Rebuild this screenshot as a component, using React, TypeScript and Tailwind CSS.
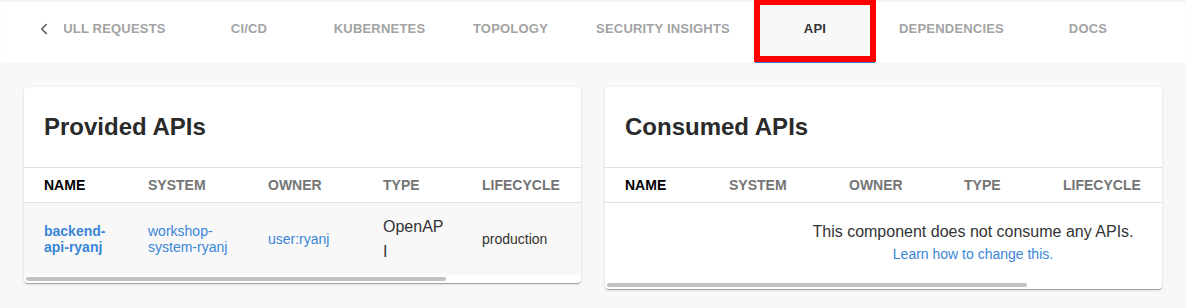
import React from 'react';
import { ChevronLeft } from 'lucide-react';

const tabs = [
  { label: 'PULL REQUESTS', width: 'w-[156px]' },
  { label: 'CI/CD', width: 'w-[122px]' },
  { label: 'KUBERNETES', width: 'w-[139px]' },
  { label: 'TOPOLOGY', width: 'w-[123px]' },
  { label: 'SECURITY INSIGHTS', width: 'w-[182px]' },
  { label: 'API', width: 'w-[122px]', active: true },
  { label: 'DEPENDENCIES', width: 'w-[151px]' },
  { label: 'DOCS', width: 'w-[122px]' },
];

const columns = [
  { label: 'NAME', cell: 'w-[108px] shrink-0 pl-5 text-black' },
  { label: 'SYSTEM', cell: 'w-[120px] shrink-0 pl-4 text-[#757575]' },
  { label: 'OWNER', cell: 'w-[115px] shrink-0 pl-4 text-[#757575]' },
  { label: 'TYPE', cell: 'w-[99px] shrink-0 pl-4 text-[#757575]' },
  { label: 'LIFECYCLE', cell: 'w-[124px] shrink-0 pl-4 text-[#757575]' },
];

const link = 'text-[#3a86d8]';

// overlay scrollbar thumb, table is wider than the card
const ScrollThumb = () => (
  <div className="h-[8px] pt-[2px]">
    <div className="ml-[2px] h-[4px] w-[420px] rounded-full bg-[#c1c1c1]" />
  </div>
);

const ApiCard = ({ title, children }: { title: string; children: React.ReactNode }) => (
  <div className="w-[558px] overflow-hidden rounded bg-white shadow-[0_2px_1px_-1px_rgba(0,0,0,0.2),0_1px_1px_0_rgba(0,0,0,0.14),0_1px_3px_0_rgba(0,0,0,0.12)]">
    <div className="flex h-[81px] items-center border-b border-[#e0e0e0] px-5 text-[24px] font-bold leading-8 text-[#2a2a2a]">
      {title}
    </div>
    <div className="w-[736px]">
      <div className="flex h-[35px] items-center border-b border-[#e0e0e0] text-[14px] font-bold leading-5">
        {columns.map((col) => (
          <div key={col.label} className={col.cell}>
            {col.label}
          </div>
        ))}
        <div className="w-[170px] shrink-0" />
      </div>
      {children}
    </div>
    <ScrollThumb />
  </div>
);

const App = () => {
  return (
    <div className="min-h-[308px] bg-[#f8f8f8] font-['Liberation_Sans',Arial,sans-serif]">
      <div className="flex h-[63px] items-start bg-white pl-6 shadow-[inset_0_2px_3px_-1px_rgba(0,0,0,0.07)]">
        <div className="flex h-[57px] w-[40px] shrink-0 items-center justify-center text-[#555]">
          <ChevronLeft size={18} strokeWidth={2} />
        </div>
        <div className="flex-1 overflow-visible">
          <div className="w-[1098px] overflow-x-clip">
            <div className="-ml-[32px] flex items-start">
              {tabs.map((tab) =>
                tab.active ? (
                  <div key={tab.label} className={`flex shrink-0 flex-col ${tab.width}`}>
                    <div className="-mt-px flex h-[63px] items-center justify-center border-[6px] border-[#ff0000] bg-[#f8f8f8] pb-1 text-[13px] font-bold tracking-[0.2px] text-[#333]">
                      {tab.label}
                    </div>
                    <div className="mx-px h-px bg-[#2e77d0]" />
                  </div>
                ) : (
                  <div
                    key={tab.label}
                    className={`flex h-[57px] shrink-0 items-center justify-center text-[13px] font-bold tracking-[0.2px] text-[#a3a3a3] ${tab.width}`}
                  >
                    {tab.label}
                  </div>
                )
              )}
            </div>
          </div>
        </div>
      </div>

      <div className="flex items-start gap-6 p-6">
        <ApiCard title="Provided APIs">
          <div className="flex h-[72px] items-center bg-[#f8f8f8] text-[14px]">
            <div className={`w-[108px] shrink-0 pl-5 font-bold leading-4 ${link}`}>
              backend-
              <br />
              api-ryanj
            </div>
            <div className={`w-[120px] shrink-0 pl-4 leading-4 ${link}`}>
              workshop-
              <br />
              system-ryanj
            </div>
            <div className={`w-[115px] shrink-0 pl-4 leading-4 ${link}`}>user:ryanj</div>
            <div className="w-[99px] shrink-0 pl-4">
              <div className="w-[63px] break-all text-[16px] leading-[25px] text-[#333]">OpenAPI</div>
            </div>
            <div className="w-[124px] shrink-0 pl-4 leading-5 text-[#333]">production</div>
            <div className="w-[170px] shrink-0" />
          </div>
        </ApiCard>

        <ApiCard title="Consumed APIs">
          <div className="h-[78px] pt-[17px] text-center">
            <div className="text-[16px] leading-6 text-[#333]">This component does not consume any APIs.</div>
            <div className={`text-[14px] leading-5 ${link}`}>Learn how to change this.</div>
          </div>
        </ApiCard>
      </div>
    </div>
  );
};

export default App;
